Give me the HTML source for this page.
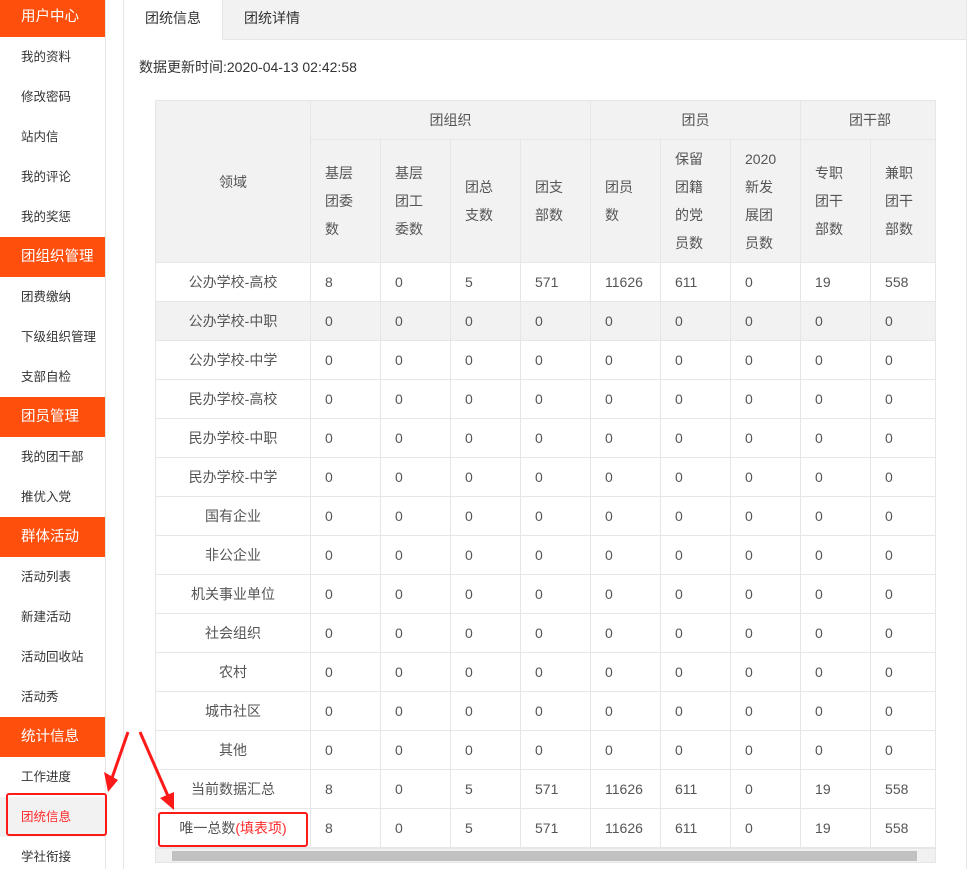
<!DOCTYPE html>
<html><head><meta charset="utf-8"><style>
*{margin:0;padding:0;box-sizing:border-box}
body{width:974px;height:869px;overflow:hidden;background:#fff;font-family:"Liberation Sans","Noto Sans CJK SC",sans-serif;position:relative;color:#333}
.side{position:absolute;left:0;top:0;width:106px;border-right:1px solid #e6e6e6;height:869px}
.side div{height:40px;line-height:40px;padding-left:21px;font-size:12.5px;color:#333;white-space:nowrap}
.side .h{background:#ff4f0d;color:#fff;font-size:14.5px}
.side .a{background:#f2f2f2;color:#ff2a2a}
.panel{position:absolute;left:123px;top:0;width:844px;height:869px;border-left:1px solid #e6e6e6;border-right:1px solid #e6e6e6}
.tabs{height:40px;background:#f2f2f2;border-bottom:1px solid #e6e6e6;font-size:14px}
.tabs span{display:inline-block;height:40px;line-height:36px;padding:0 21px}
.tabs .on{background:#fff;border-right:1px solid #e6e6e6;height:40px}
.upd{position:absolute;left:15px;top:57px;font-size:14px;color:#333}
table{position:absolute;left:155px;top:100px;border-collapse:collapse;font-size:14px;color:#555;table-layout:fixed}
td{border:1px solid #e6e6e6;height:39px;padding:0 14px;white-space:nowrap;overflow:hidden}
thead td{background:#f2f2f2}
tr.g td{background:#f2f2f2}
.c{text-align:center;padding:0}
.hh td{line-height:28px}
.wrap{position:absolute;left:155px;top:100px;width:781px;height:763px;overflow:hidden;border-right:1px solid #e6e6e6}
.sb{position:absolute;left:155px;top:848px;width:781px;height:15px;background:#f1f1f1;border:1px solid #e6e6e6}
.sb i{position:absolute;left:16px;top:2px;width:745px;height:10px;background:#c1c1c1}
.box{position:absolute;border:2px solid #ff1a1a;border-radius:3px}
</style></head><body>
<div class="side">
<div class="h" style="height:37px;line-height:34px">用户中心</div>
<div>我的资料</div><div>修改密码</div><div>站内信</div><div>我的评论</div><div>我的奖惩</div>
<div class="h">团组织管理</div><div>团费缴纳</div><div>下级组织管理</div><div>支部自检</div>
<div class="h">团员管理</div><div>我的团干部</div><div>推优入党</div>
<div class="h">群体活动</div><div>活动列表</div><div>新建活动</div><div>活动回收站</div><div>活动秀</div>
<div class="h">统计信息</div><div>工作进度</div><div class="a">团统信息</div><div>学社衔接</div>
</div>
<div class="panel"><div class="tabs"><span class="on">团统信息</span><span>团统详情</span></div>
<div class="upd">数据更新时间:2020-04-13 02:42:58</div></div>
<div class="wrap"><table style="left:0;top:0;width:851px">
<colgroup><col style="width:155px"><col style="width:70px"><col style="width:70px"><col style="width:70px"><col style="width:70px"><col style="width:70px"><col style="width:70px"><col style="width:70px"><col style="width:70px"><col style="width:136px"></colgroup>
<thead>
<tr><td class="c" rowspan="2">领域</td><td class="c" colspan="4">团组织</td><td class="c" colspan="3">团员</td><td class="c" colspan="2" style="text-align:left;padding-left:48px">团干部</td></tr>
<tr class="hh" style="height:123px"><td>基层<br>团委<br>数</td><td>基层<br>团工<br>委数</td><td>团总<br>支数</td><td>团支<br>部数</td><td>团员<br>数</td><td>保留<br>团籍<br>的党<br>员数</td><td>2020<br>新发<br>展团<br>员数</td><td>专职<br>团干<br>部数</td><td>兼职<br>团干<br>部数</td></tr>
</thead><tbody>
<tr><td class="c">公办学校-高校</td><td>8</td><td>0</td><td>5</td><td>571</td><td>11626</td><td>611</td><td>0</td><td>19</td><td>558</td></tr>
<tr class="g"><td class="c">公办学校-中职</td><td>0</td><td>0</td><td>0</td><td>0</td><td>0</td><td>0</td><td>0</td><td>0</td><td>0</td></tr>
<tr><td class="c">公办学校-中学</td><td>0</td><td>0</td><td>0</td><td>0</td><td>0</td><td>0</td><td>0</td><td>0</td><td>0</td></tr>
<tr><td class="c">民办学校-高校</td><td>0</td><td>0</td><td>0</td><td>0</td><td>0</td><td>0</td><td>0</td><td>0</td><td>0</td></tr>
<tr><td class="c">民办学校-中职</td><td>0</td><td>0</td><td>0</td><td>0</td><td>0</td><td>0</td><td>0</td><td>0</td><td>0</td></tr>
<tr><td class="c">民办学校-中学</td><td>0</td><td>0</td><td>0</td><td>0</td><td>0</td><td>0</td><td>0</td><td>0</td><td>0</td></tr>
<tr><td class="c">国有企业</td><td>0</td><td>0</td><td>0</td><td>0</td><td>0</td><td>0</td><td>0</td><td>0</td><td>0</td></tr>
<tr><td class="c">非公企业</td><td>0</td><td>0</td><td>0</td><td>0</td><td>0</td><td>0</td><td>0</td><td>0</td><td>0</td></tr>
<tr><td class="c">机关事业单位</td><td>0</td><td>0</td><td>0</td><td>0</td><td>0</td><td>0</td><td>0</td><td>0</td><td>0</td></tr>
<tr><td class="c">社会组织</td><td>0</td><td>0</td><td>0</td><td>0</td><td>0</td><td>0</td><td>0</td><td>0</td><td>0</td></tr>
<tr><td class="c">农村</td><td>0</td><td>0</td><td>0</td><td>0</td><td>0</td><td>0</td><td>0</td><td>0</td><td>0</td></tr>
<tr><td class="c">城市社区</td><td>0</td><td>0</td><td>0</td><td>0</td><td>0</td><td>0</td><td>0</td><td>0</td><td>0</td></tr>
<tr><td class="c">其他</td><td>0</td><td>0</td><td>0</td><td>0</td><td>0</td><td>0</td><td>0</td><td>0</td><td>0</td></tr>
<tr><td class="c">当前数据汇总</td><td>8</td><td>0</td><td>5</td><td>571</td><td>11626</td><td>611</td><td>0</td><td>19</td><td>558</td></tr>
<tr><td class="c">唯一总数<span style="color:#ff2a2a">(填表项)</span></td><td>8</td><td>0</td><td>5</td><td>571</td><td>11626</td><td>611</td><td>0</td><td>19</td><td>558</td></tr>
</tbody></table></div>
<div class="sb"><i></i></div>
<div class="box" style="left:6px;top:793px;width:101px;height:43px"></div>
<div class="box" style="left:158px;top:812px;width:150px;height:35px"></div>
<svg style="position:absolute;left:0;top:0" width="974" height="869">
<line x1="128" y1="732" x2="112" y2="778" stroke="#ff1a1a" stroke-width="3"/>
<polygon points="104,772 118,780 108,792" fill="#ff1a1a"/>
<line x1="140" y1="732" x2="168" y2="796" stroke="#ff1a1a" stroke-width="3"/>
<polygon points="160,798 174,792 174,810" fill="#ff1a1a"/>
</svg>
</body></html>
